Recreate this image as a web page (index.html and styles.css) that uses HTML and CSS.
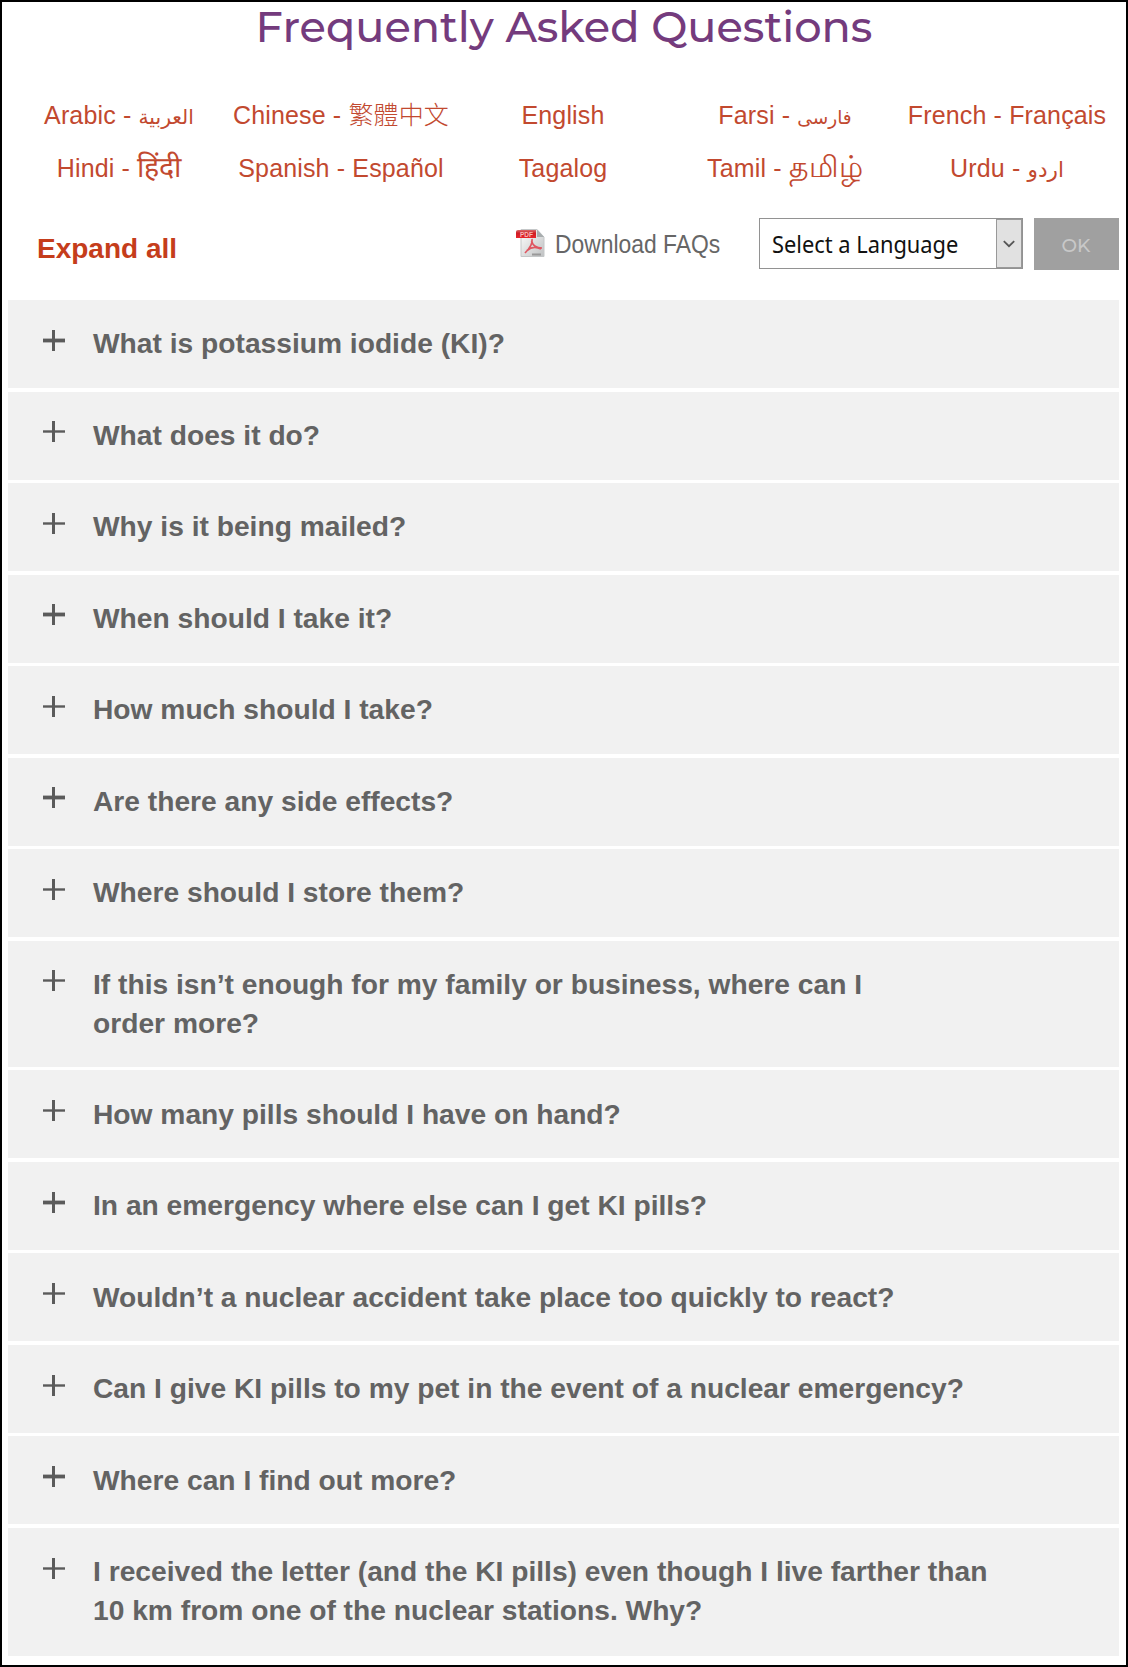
FILE: index.html
```html
<!DOCTYPE html>
<html lang="en">
<head>
<meta charset="utf-8">
<title>Frequently Asked Questions</title>
<link rel="stylesheet" href="styles.css">
</head>
<body>
<svg class="sprite" aria-hidden="true">
  <symbol id="plus" viewBox="0 0 22 21"><path d="M0 10.500H22" stroke="currentColor" fill="none"/><path d="M10.500 0V21" stroke="currentColor" stroke-width="3" fill="none"/></symbol>
</svg>
<main class="page">
  <h1 class="title"><span class="title-text">Frequently Asked Questions</span></h1>
  <nav class="languages">
    <a><span>Arabic - </span><bdi class="arab">العربية</bdi></a>
    <a><span>Chinese - </span><span class="han">繁體中文</span></a>
    <a>English</a>
    <a><span>Farsi - </span><bdi class="arab farsi">فارسی</bdi></a>
    <a>French - Français</a>
    <a><span>Hindi - </span><span class="hindi">हिंदी</span></a>
    <a>Spanish - Español</a>
    <a>Tagalog</a>
    <a><span>Tamil - </span><span class="tamil">தமிழ்</span></a>
    <a><span>Urdu - </span><bdi class="arab urdu">اردو</bdi></a>
  </nav>
  <div class="toolbar">
    <a class="expand">Expand all</a>
    <svg class="pdf" viewBox="0 0 30 30" width="30" height="30" aria-hidden="true">
      <defs>
        <linearGradient id="sheet" x1="0" y1="0" x2="1" y2="1"><stop offset="0" stop-color="#fff"/><stop offset="1" stop-color="#bfc1c2"/></linearGradient>
        <linearGradient id="flag" x1="0" y1="0" x2="0" y2="1"><stop offset="0" stop-color="#d8686a"/><stop offset=".4" stop-color="#cf1d24"/><stop offset="1" stop-color="#e8262c"/></linearGradient>
      </defs>
      <path d="M5 .5H21L28 8V27.500H5Z" fill="url(#sheet)" stroke="#c4c7c8"/>
      <path d="M21 .5V8H28Z" fill="#a8adae"/>
      <path d="M0 2.500Q0 1 2 1H20V9H0Z" fill="url(#flag)"/>
      <text x="4" y="7.500" class="pdf-label">PDF</text>
      <path d="M16 10C17 15 13 20 9 24M15.500 12C17 17 20 19 26 19M11 21.500C15 18 20 17.500 25 20" stroke="#df5560" stroke-width="1.700" fill="none"/>
      <path d="M16 25.500H25" stroke="#999" stroke-width="2"/>
    </svg>
    <span class="download"><span class="download-text">Download FAQs</span></span>
    <div class="select"><span class="select-label"><span class="select-text">Select a Language</span></span><span class="arrow"><svg width="12" height="8" viewBox="0 0 12 8"><path d="M.8 1.200L6 6.200L11.200 1.200" fill="none" stroke="#555" stroke-width="1.800"/></svg></span></div>
    <button class="ok">OK</button>
  </div>
  <section class="faq">
    <div class="item"><svg class="plus bold"><use href="#plus"/></svg><h2>What is potassium iodide (KI)?</h2></div>
    <div class="item"><svg class="plus"><use href="#plus"/></svg><h2>What does it do?</h2></div>
    <div class="item"><svg class="plus"><use href="#plus"/></svg><h2>Why is it being mailed?</h2></div>
    <div class="item"><svg class="plus bold"><use href="#plus"/></svg><h2>When should I take it?</h2></div>
    <div class="item"><svg class="plus"><use href="#plus"/></svg><h2>How much should I take?</h2></div>
    <div class="item"><svg class="plus bold"><use href="#plus"/></svg><h2>Are there any side effects?</h2></div>
    <div class="item"><svg class="plus"><use href="#plus"/></svg><h2>Where should I store them?</h2></div>
    <div class="item"><svg class="plus"><use href="#plus"/></svg><h2>If this isn’t enough for my family or business, where can I<br>order more?</h2></div>
    <div class="item"><svg class="plus"><use href="#plus"/></svg><h2>How many pills should I have on hand?</h2></div>
    <div class="item"><svg class="plus bold"><use href="#plus"/></svg><h2>In an emergency where else can I get KI pills?</h2></div>
    <div class="item"><svg class="plus"><use href="#plus"/></svg><h2>Wouldn’t a nuclear accident take place too quickly to react?</h2></div>
    <div class="item"><svg class="plus"><use href="#plus"/></svg><h2>Can I give KI pills to my pet in the event of a nuclear emergency?</h2></div>
    <div class="item"><svg class="plus bold"><use href="#plus"/></svg><h2>Where can I find out more?</h2></div>
    <div class="item"><svg class="plus"><use href="#plus"/></svg><h2>I received the letter (and the KI pills) even though I live farther than<br>10 km from one of the nuclear stations. Why?</h2></div>
  </section>
</main>
</body>
</html>
```
FILE: styles.css
```css
* { box-sizing: border-box; }
body { margin: 0; background: #fff; font-family: "Liberation Sans", Arial, sans-serif; }
.sprite { display: none; }
.page { height: 1667px; border: 2px solid #000; padding: 0 7px 0 6px; overflow: hidden; }
.title { margin: 0; height: 87px; line-height: 50px; text-align: center; font-family: Montserrat, Inter, sans-serif; font-size: 42px; font-weight: 500; color: #743b7d; white-space: nowrap; }
.title-text { display: inline-block; transform: scaleX(1.025); }
.languages { display: grid; grid-template-columns: repeat(5, 222px); grid-auto-rows: 53px; height: 127px; }
.languages a { display: flex; justify-content: center; align-items: baseline; height: 53px; line-height: 53px; font-size: 25px; letter-spacing: .15px; color: #c2492f; white-space: pre; }
.languages .arab { font-family: "DejaVu Sans", sans-serif; font-size: 20.300px; letter-spacing: 0; }
.languages .farsi { font-size: 18.500px; }
.languages .urdu { font-size: 21.500px; }
.han { font-family: "Noto Sans CJK TC", sans-serif; font-weight: 300; line-height: 1; }
.hindi, .tamil { line-height: 1; letter-spacing: 0; }
.hindi { font-size: 28.500px; }
.tamil { font-size: 30px; }
.toolbar { display: flex; align-items: flex-start; height: 84px; padding-left: 29px; }
.expand { flex: none; width: 479px; padding-top: 17px; font-size: 28px; line-height: 32px; font-weight: 700; color: #c53d1b; }
.pdf { flex: none; margin-top: 13px; }
.pdf-label { font-size: 6.500px; font-weight: 700; fill: #f6b9b9; }
.download { flex: none; width: 213px; padding: 12px 0 0 9px; font-size: 25px; line-height: 32px; color: #666; white-space: nowrap; }
.download-text { display: inline-block; transform: scaleX(.915); transform-origin: left; }
.select { flex: none; display: flex; width: 264px; height: 51px; margin-top: 2px; border: 1px solid #929292; background: #fff; }
.select-label { flex: 1; padding-left: 12px; font-family: "Noto Sans", sans-serif; font-size: 24px; line-height: 49px; color: #111; white-space: nowrap; }
.select-text { display: inline-block; transform: scaleX(.91); transform-origin: left; }
.arrow { display: flex; flex: none; align-items: center; justify-content: center; width: 26px; background: #e1e1e1; border: 1px solid #999; }
.ok { flex: none; width: 85px; height: 52px; margin: 2px 0 0 10.500px; padding: 2px 0 0; border: 0; background: #a0a0a0; color: #c8c8c8; font-family: Montserrat, Inter, sans-serif; font-size: 18.500px; font-weight: 500; }
.faq { display: flex; flex-direction: column; gap: 3.500px; }
.item { display: flex; min-height: 88px; padding: 24.400px 0 24.600px 35px; background: #f1f1f1; }
.plus { flex: none; width: 22px; height: 21px; margin: 5.600px 28px 0 0; color: #5b5b5b; stroke-width: 2.400px; }
.plus.bold { stroke-width: 3.800px; }
.item h2 { margin: 0; font-size: 28.190px; line-height: 38.750px; font-weight: 700; color: #636363; white-space: nowrap; }
.item:last-child { min-height: 128px; }
```
